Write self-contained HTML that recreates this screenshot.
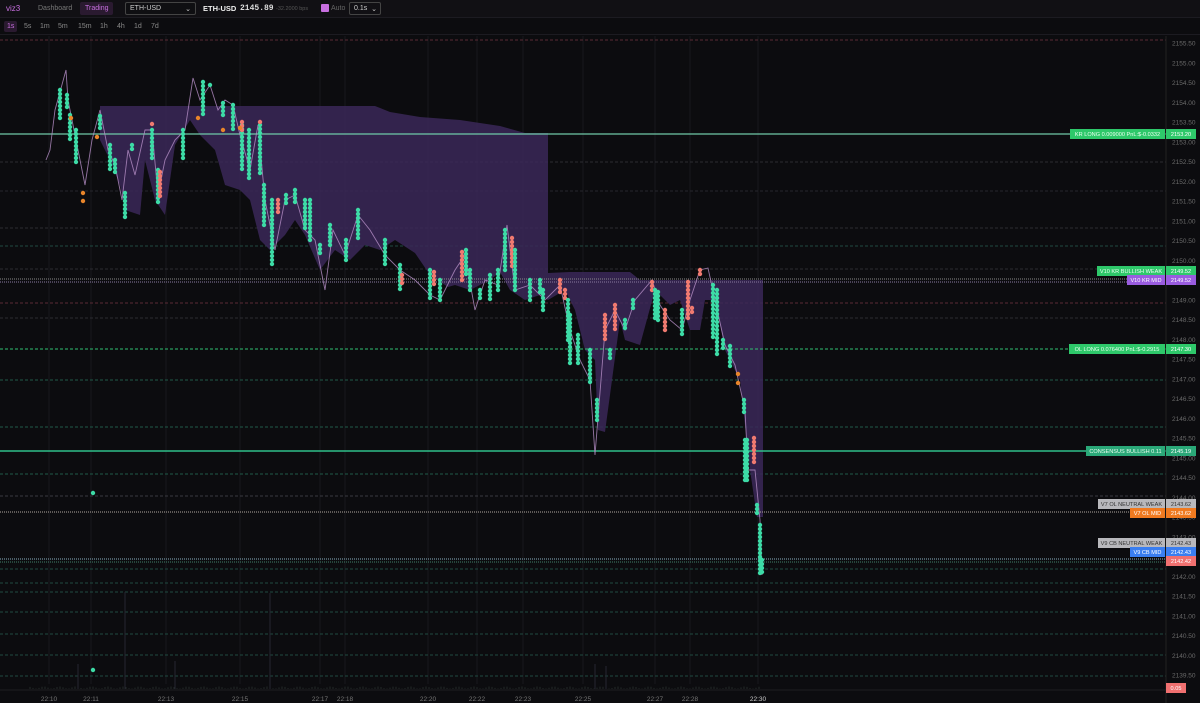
<!DOCTYPE html>
<html><head><meta charset="utf-8"><style>
*{margin:0;padding:0;box-sizing:border-box}
body{width:1200px;height:703px;background:#0c0c0f;overflow:hidden;font-family:"Liberation Sans",sans-serif;color:#aaa;position:relative}
.hdr{position:absolute;left:0;top:0;width:1200px;height:18px;background:#111014;border-bottom:1px solid #1c1b21;font-size:7px}
.hdr span{position:absolute;top:5px}
.tf{position:absolute;left:0;top:18px;width:1200px;height:17px;border-bottom:1px solid #1c1b21;font-size:7px;color:#888}
.tf span{position:absolute;top:5px}
svg{position:absolute;left:0;top:0}
</style></head><body>
<div class="hdr">
<span style="left:6px;color:#c86fe0;font-size:8px;top:4px">viz3</span>
<span style="left:38px;color:#777">Dashboard</span>
<span style="left:80px;top:2px;padding:3px 5px;background:#2a1a30;color:#c86fe0;border-radius:2px">Trading</span>
<span style="left:125px;top:2px;width:71px;height:13px;border:1px solid #444;border-radius:2px;padding:2px 4px;color:#ccc;background:#0f0f12">ETH-USD<b style="position:absolute;right:4px;font-weight:normal">⌄</b></span>
<span style="left:203px;color:#eee;font-weight:bold;font-size:7.5px;top:4px">ETH-USD</span>
<span style="left:240px;color:#ddd;font-family:'Liberation Mono',monospace;font-weight:bold;font-size:8px;top:4px">2145.89</span>
<span style="left:276px;color:#555;font-size:5.5px;top:6px">-32.2000 bps</span>
<span style="left:321px;top:4px;width:8px;height:8px;background:#c86fe0;border-radius:1px"></span>
<span style="left:331px;color:#666">Auto</span>
<span style="left:349px;top:2px;width:32px;height:13px;border:1px solid #444;border-radius:2px;padding:2px 4px;color:#ccc">0.1s<b style="position:absolute;right:3px;font-weight:normal">⌄</b></span>
</div>
<div class="tf">
<span style="left:4px;top:3px;padding:2px 3px;background:#2a1a30;color:#c86fe0;border-radius:2px">1s</span>
<span style="left:24px">5s</span><span style="left:40px">1m</span><span style="left:58px">5m</span><span style="left:78px">15m</span><span style="left:100px">1h</span><span style="left:117px">4h</span><span style="left:134px">1d</span><span style="left:151px">7d</span>
</div>
<svg id="s" width="1200" height="703" viewBox="0 0 1200 703"></svg>
<script>
var s=document.getElementById('s'),h='';
function Y(p){return 43+(2155.5-p)*39.5}
[49,91,166,240,320,345,428,477,523,583,655,690,758].forEach(function(x){h+='<line x1="'+x+'" y1="36" x2="'+x+'" y2="684" stroke="#17171c" stroke-width="1"/>'});
var gl=[[40,'#5a2a35'],[162,'#2c2c32'],[191,'#26262c'],[228,'#2c2c32'],[246,'#1f4a40'],[269,'#2c2c32'],[303,'#5a2a35'],[318,'#2c2c32'],[380,'#1f5a48'],[427,'#1f5a48'],[474,'#1f5a48'],[496,'#3a3a40'],[569,'#1f4a40'],[583,'#1f4a40'],[592,'#1f4a40'],[612,'#1f4a40'],[634,'#1f4a40'],[655,'#1f4a40'],[676,'#1f4a40']];
gl.forEach(function(g){h+='<line x1="0" y1="'+g[0]+'" x2="1166" y2="'+g[0]+'" stroke="'+g[1]+'" stroke-dasharray="3 2" stroke-width="1"/>'});
h+='<polygon fill="#3b2858" fill-opacity="0.85" points="100,106 375,106 390,112 420,117 460,120 500,126 525,133 548,133 548,273 570,272 630,272 640,280 763,280 763,517 757,517 750,470 740,380 725,350 715,300 705,300 700,330 690,330 680,300 670,305 655,290 640,345 625,340 620,320 612,380 605,432 598,430 595,360 585,350 575,310 565,290 548,300 540,295 525,300 510,290 500,272 490,280 470,290 455,285 448,287 430,275 415,253 395,240 380,250 365,245 350,260 335,250 320,270 305,235 295,220 285,235 270,250 260,240 250,200 240,190 225,185 215,150 200,135 190,120 175,145 165,215 155,200 145,160 140,215 125,210 120,185 110,160 100,140"/>';
h+='<line x1="0" y1="134" x2="1166" y2="134" stroke="#6fc9a8" stroke-width="1.3"/>';
h+='<line x1="0" y1="279" x2="1166" y2="279" stroke="#8a8a8a" stroke-dasharray="1 1"/>';
h+='<line x1="0" y1="282" x2="1166" y2="282" stroke="#8a7aa0" stroke-dasharray="1 1"/>';
h+='<line x1="0" y1="349" x2="1166" y2="349" stroke="#2fbf70" stroke-dasharray="3 2"/>';
h+='<line x1="0" y1="451" x2="1166" y2="451" stroke="#2fbf8a" stroke-width="1.5"/>';
h+='<line x1="0" y1="512" x2="1166" y2="512" stroke="#b0a8a0" stroke-dasharray="1 1"/>';
h+='<line x1="0" y1="559" x2="1166" y2="559" stroke="#8ab0c0" stroke-dasharray="1 1"/>';
h+='<line x1="0" y1="562" x2="1166" y2="562" stroke="#40806a" stroke-dasharray="1 1"/>';
var pl=[[46,160],[50,150],[55,110],[60,92],[66,70],[68,100],[72,120],[78,150],[85,185],[92,140],[100,110],[108,150],[115,165],[122,200],[128,150],[135,175],[145,130],[152,130],[158,195],[165,160],[175,140],[185,130],[193,78],[200,100],[210,85],[218,110],[225,100],[233,105],[240,135],[250,170],[258,125],[265,200],[275,250],[285,200],[295,195],[305,230],[315,240],[325,290],[333,230],[345,255],[358,215],[370,230],[385,255],[400,270],[415,280],[430,295],[440,300],[455,270],[465,255],[475,310],[485,280],[498,285],[507,225],[515,290],[530,285],[545,300],[560,285],[570,330],[580,360],[590,380],[595,455],[605,330],[615,310],[625,330],[635,300],[652,280],[660,305],[670,320],[682,330],[690,300],[700,270],[708,268],[715,300],[725,345],[735,365],[745,410],[748,470],[755,470],[760,520],[762,575]];
h+='<polyline fill="none" stroke="#b890c8" stroke-opacity="0.8" stroke-width="0.9" points="'+pl.map(function(p){return p.join(',')}).join(' ')+'"/>';
var T='#3ddba6',R='#f07a70',O='#e8852a';
var c=[[60,90,120,T],[67,95,110,T],[70,115,140,T],[76,130,165,T],[100,116,130,T],[110,145,170,T],[115,160,172,T],[125,193,218,T],[132,145,150,T],[152,130,158,T],[152,124,124,R],[158,170,205,T],[160,172,198,R],[183,130,160,T],[203,82,115,T],[210,85,88,T],[223,103,115,T],[233,105,130,T],[242,125,170,T],[242,122,130,R],[249,130,180,T],[260,125,175,T],[260,122,122,R],[264,185,228,T],[272,200,265,T],[278,200,215,R],[286,195,205,T],[295,190,205,T],[305,200,230,T],[310,200,240,T],[320,245,255,T],[330,225,245,T],[346,240,260,T],[358,210,240,T],[385,240,265,T],[400,265,290,T],[402,275,285,R],[430,270,300,T],[434,272,285,R],[440,280,300,T],[462,252,280,R],[466,250,275,T],[470,270,290,T],[480,290,300,T],[490,275,300,T],[498,270,290,T],[505,230,270,T],[512,238,266,R],[515,250,290,T],[530,280,300,T],[540,280,295,T],[543,290,310,T],[560,280,295,R],[565,290,300,R],[568,300,340,T],[570,315,365,T],[578,335,365,T],[590,350,385,T],[597,400,420,T],[605,315,340,R],[610,350,360,T],[615,305,330,R],[625,320,330,T],[633,300,310,T],[652,282,290,R],[655,290,318,T],[658,292,320,T],[665,310,330,R],[682,310,335,T],[688,282,320,R],[692,308,315,R],[700,270,275,R],[713,285,340,T],[717,290,355,T],[723,340,350,T],[730,346,368,T],[744,400,415,T],[747,440,480,T],[745,440,483,T],[754,438,462,R],[757,505,515,T],[760,525,575,T],[762,560,575,T],[93,493,493,T],[93,670,670,T]];
c.forEach(function(d){for(var y=d[1];y<=d[2];y+=4)h+='<circle cx="'+d[0]+'" cy="'+y+'" r="2.2" fill="'+d[3]+'"/>'});
[[71,118],[83,193],[83,201],[97,137],[198,118],[223,130],[738,374],[738,383],[240,128]].forEach(function(p){h+='<circle cx="'+p[0]+'" cy="'+p[1]+'" r="2.2" fill="'+O+'"/>'});
h+='<line x1="0" y1="690" x2="1166" y2="690" stroke="#1e1e22" />';
for(var x=30;x<760;x+=3){var v=(Math.sin(x*1.7)*0.5+0.5)*2+0.5;h+='<line x1="'+x+'" y1="689" x2="'+x+'" y2="'+(689-v)+'" stroke="#232a28"/>'}
[[78,664],[125,592],[175,661],[595,664],[606,666],[270,593]].forEach(function(p){h+='<line x1="'+p[0]+'" y1="689" x2="'+p[0]+'" y2="'+p[1]+'" stroke="#262630" />'});
h+='<line x1="1166" y1="36" x2="1166" y2="703" stroke="#222"/>';
for(var p=2155.5;p>=2139.5;p-=0.5){h+='<text x="1172" y="'+(Y(p)+2.5)+'" font-size="6.5" fill="#6a6a6a" font-family="Liberation Sans">'+p.toFixed(2)+'</text>'}
function tag(x,y,w,bg,fg,t){h+='<rect x="'+x+'" y="'+(y-5)+'" width="'+w+'" height="10" fill="'+bg+'"/><text x="'+(x+w/2)+'" y="'+(y+2.2)+'" font-size="5.6" text-anchor="middle" fill="'+fg+'" font-family="Liberation Sans">'+t+'</text>'}
tag(1070,134,95,'#2ec86a','#eafff0','KR LONG 0.009000 PnL:$-0.0332');tag(1166,134,30,'#2ec86a','#fff','2153.20');
tag(1097,271,68,'#2ec86a','#eafff0','V10 KR BULLISH WEAK');tag(1166,271,30,'#2ec86a','#fff','2149.52');
tag(1127,280,38,'#9a5ce0','#fff','V10 KR MID');tag(1166,280,30,'#9a5ce0','#fff','2149.52');
tag(1069,349,96,'#2ec86a','#eafff0','OL LONG 0.076400 PnL:$-0.2915');tag(1166,349,30,'#2ec86a','#fff','2147.30');
tag(1086,451,79,'#2aa878','#eafff0','CONSENSUS BULLISH 0.11');tag(1166,451,30,'#2aa878','#fff','2145.19');
tag(1098,504,67,'#b8b8bc','#333','V7 OL NEUTRAL WEAK');tag(1166,504,30,'#b8b8bc','#333','2143.62');
tag(1130,513,35,'#f07a20','#fff','V7 OL MID');tag(1166,513,30,'#f07a20','#fff','2143.62');
tag(1098,543,67,'#b8b8bc','#333','V9 CB NEUTRAL WEAK');tag(1166,543,30,'#b8b8bc','#333','2142.43');
tag(1130,552,35,'#3a7ef0','#fff','V9 CB MID');tag(1166,552,30,'#3a7ef0','#fff','2142.43');
tag(1166,561,30,'#f07070','#fff','2142.42');
tag(1166,688,20,'#f07070','#fff','0.05');
[[49,'22:10'],[91,'22:11'],[166,'22:13'],[240,'22:15'],[320,'22:17'],[345,'22:18'],[428,'22:20'],[477,'22:22'],[523,'22:23'],[583,'22:25'],[655,'22:27'],[690,'22:28'],[758,'22:30']].forEach(function(t){h+='<text x="'+t[0]+'" y="701" font-size="6.5" fill="'+(t[1]=='22:30'?'#ccc':'#777')+'" text-anchor="middle" font-family="Liberation Sans">'+t[1]+'</text>'});
s.innerHTML=h;
</script>
</body></html>
